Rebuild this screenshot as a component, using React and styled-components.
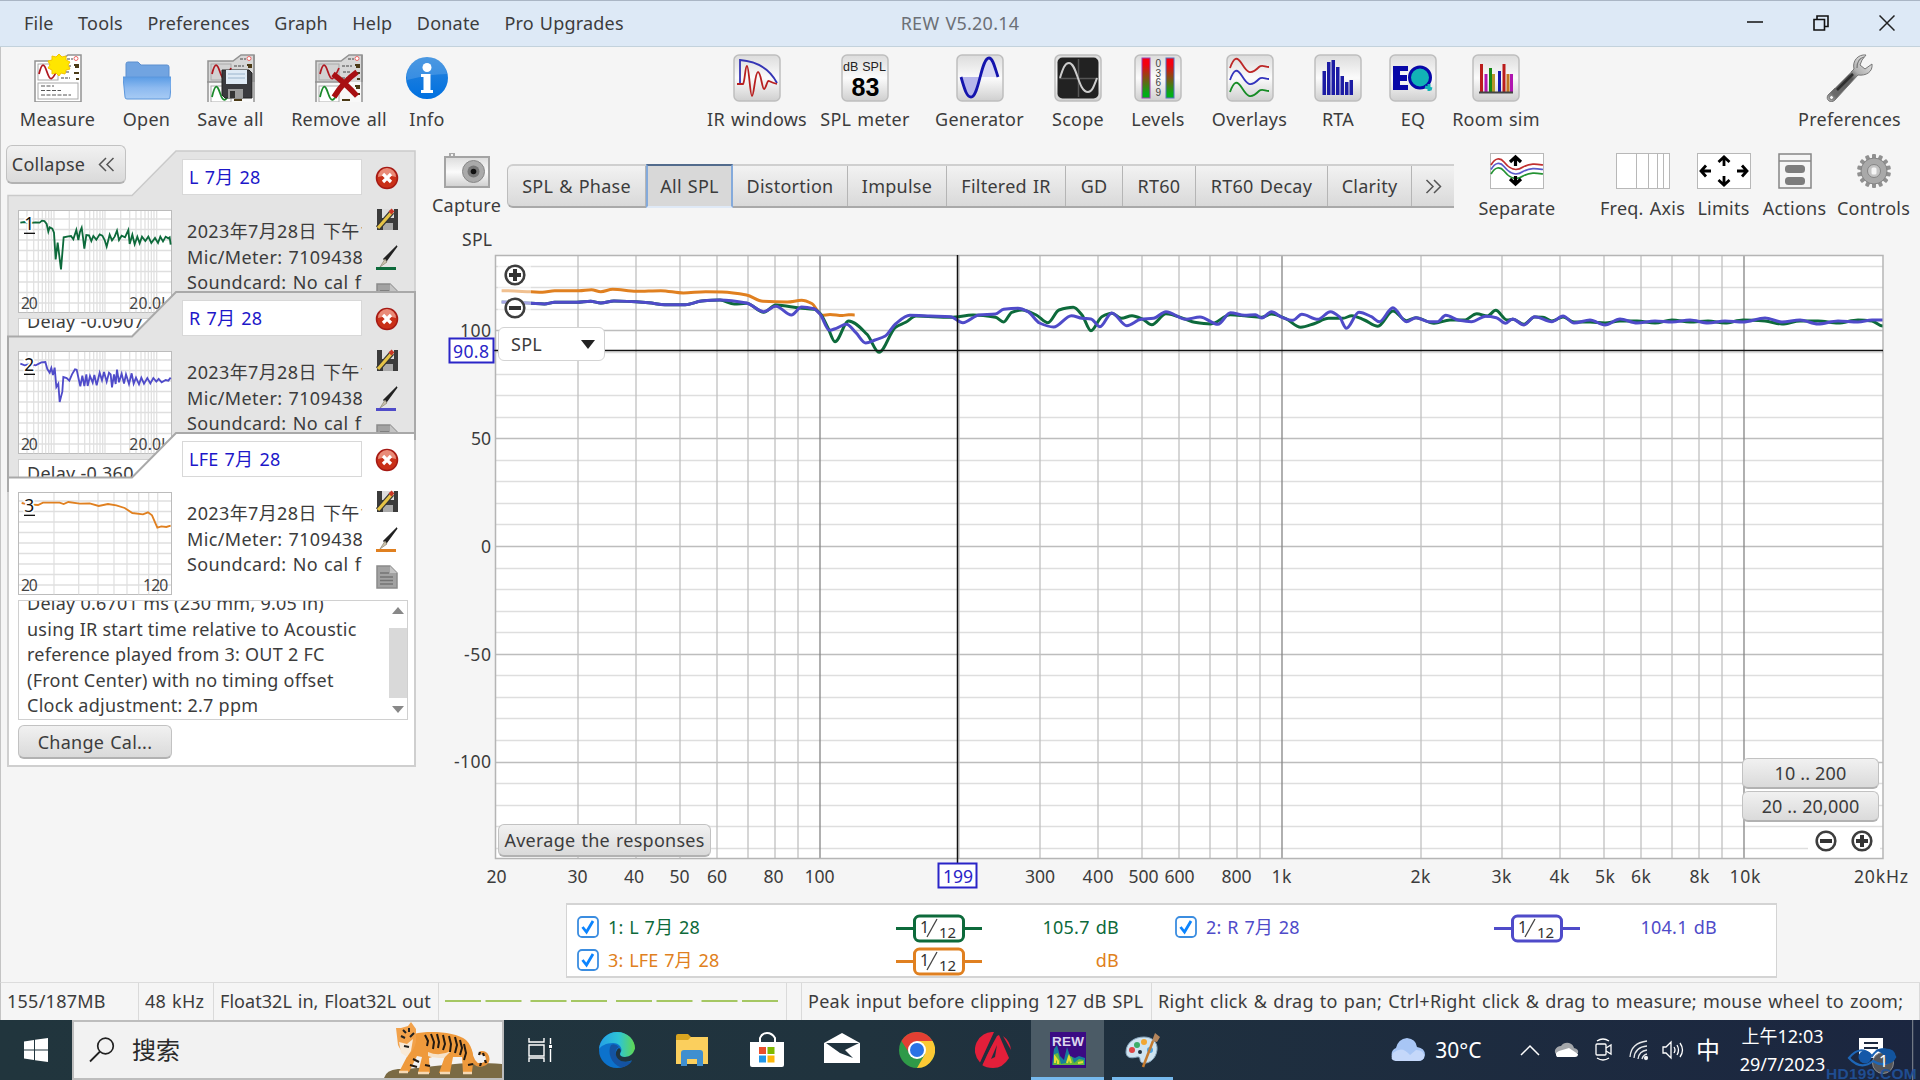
import styled, {createGlobalStyle} from "styled-components";

const GlobalStyle = createGlobalStyle`
    * {
        box-sizing: border-box;
    }

    body {
        margin: 0;
        overflow: hidden;
        background: #f5f5f5;
        color: #3c3c3c;
        font-family: "Noto Sans", "Noto Sans CJK SC", sans-serif;
        font-size: 18px;
        line-height: 24px;
        letter-spacing: 0.25px;
        word-spacing: 1.1px;
        white-space: nowrap;
    }

    svg {
        display: block;
        flex: none;
        letter-spacing: 0;
        word-spacing: 0;
    }
`;

const Window = styled.div`
    width: 1920px;
    height: 1080px;
    display: flex;
    flex-direction: column;
    overflow: hidden;
`;

const TitleBar = styled.header`
    height: 47px;
    display: grid;
    grid-template-columns: 840px 240px 1fr;
    align-items: center;
    padding-bottom: 2px;
    background: #dde9f6;
    border-top: 1px solid #aab6c5;
    border-bottom: 1px solid #c3d2dc;
`;

const Menu = styled.nav`
    display: flex;
    padding-left: 24px;
    gap: 24.5px;
    letter-spacing: 0.2px;
`;

const Title = styled.div`
    text-align: center;
    color: #6c7076;
`;

const WindowButtons = styled.div`
    display: flex;
    justify-content: flex-end;
    gap: 50px;
    padding-right: 25px;
`;

const Toolbar = styled.div`
    height: 93px;
    display: flex;
    align-items: flex-start;
    padding-top: 7px;
    border-left: 1px solid #c4c4c4;
`;

const Tool = styled.div`
    width: ${(props) => props.$width}px;
    margin-left: ${(props) => props.$gap}px;
    flex: none;
    display: flex;
    flex-direction: column;
    align-items: center;
    gap: ${(props) => props.$space || 5}px;
`;

const Main = styled.main`
    height: 842px;
    display: flex;
    border-left: 1px solid #c4c4c4;
`;

const Sidebar = styled.aside`
    width: 430px;
    flex: none;
    padding: 5px 0 0 5px;
`;

const Button = styled.button`
    width: ${(props) => props.$width}px;
    height: ${(props) => props.$height}px;
    display: flex;
    align-items: center;
    justify-content: center;
    gap: 13px;
    padding: 0;
    border: 1px solid #c2c2c2;
    border-bottom: 2px solid #b2b2b2;
    border-radius: 6px;
    background: linear-gradient(#f1f1f1, #dadada);
    color: inherit;
    font: inherit;
    letter-spacing: inherit;
    word-spacing: inherit;
`;

const CollapseButton = styled(Button)`
    padding-right: 5px;
`;

const Card = styled.section`
    position: relative;
    width: 411px;
    height: ${(props) => (props.$open ? 335 : 187)}px;
    margin-top: ${(props) => props.$offset}px;
    padding: 9px 9px 0 12px;
    overflow: hidden;
`;

const CardShape = styled.svg`
    position: absolute;
    left: 0;
    top: 0;
`;

const CardBody = styled.div`
    position: relative;
    display: grid;
    grid-template-columns: 164px 180px 1fr;
    height: 159px;
`;

const ThumbnailCell = styled.div`
    padding-top: 51px;
`;

const NameField = styled.div`
    height: 36px;
    padding: 5px 6px;
    border: 1px solid #d8d8d8;
    background: #fff;
    color: #1d17c9;
`;

const Details = styled.div`
    margin: 24px 0 0 5px;
    width: 175px;
    overflow: hidden;
    line-height: 25.7px;
    letter-spacing: 0.37px;
`;

const CardIcons = styled.div`
    display: grid;
    justify-items: center;
    align-content: start;
    grid-template-rows: 41px 38px 38px 25px;
    padding: 7px 0 0 3px;
`;

const Notes = styled.div`
    position: relative;
    height: ${(props) => (props.$open ? 120 : 19)}px;
    width: 390px;
    display: flex;
    justify-content: space-between;
    overflow: hidden;
    border: 1px solid #d0d0d0;
    background: #fff;
`;

const NotesText = styled.div`
    margin: ${(props) => props.$scroll}px 0 0 8px;
    line-height: 25.5px;
    word-spacing: 0;
`;

const Scrollbar = styled.div`
    width: 18px;
    height: 118px;
    display: flex;
    flex-direction: column;
    justify-content: space-between;
    background: #fff;
`;

const ScrollThumb = styled.div`
    height: 70px;
    margin-top: 8px;
    background: #d9d9d9;
`;

const CalRow = styled.div`
    position: relative;
    padding-top: 5px;
`;

const Content = styled.div`
    flex: 1;
    min-width: 0;
`;

const GraphBar = styled.div`
    height: 85px;
    display: flex;
    align-items: flex-start;
    padding-top: 13px;
`;

const Tabs = styled.div`
    display: flex;
    margin: 11px 0 0 6px;
    height: 44px;
    width: 947px;
    flex: none;
    border-radius: 6px 0 0 6px;
    border-top: 2px solid #cfcfcf;
    border-bottom: 2px solid #a9a9a9;
    border-left: 1px solid #bdbdbd;
    background: linear-gradient(#f2f2f2, #d9d9d9);
`;

const Tab = styled.div`
    width: ${(props) => props.$width}px;
    flex: none;
    display: flex;
    align-items: center;
    justify-content: center;
    border-right: 1px solid #b5b5b5;
    ${(props) =>
        props.$active &&
        `
        margin: -2px 0;
        background: #d8d8d8;
        border: 2px solid #84aadb;
        border-top-color: #526b8c;
        border-bottom-color: #dfe9f6;
    `}

    &:last-child {
        border-right: none;
    }
`;

const ChartArea = styled.div`
    position: relative;
    height: 675px;
`;

const Overlay = styled.div`
    position: absolute;
    left: ${(props) => props.$left}px;
    top: ${(props) => props.$top}px;
`;

const Select = styled.div`
    width: 107px;
    height: 34px;
    display: flex;
    align-items: center;
    justify-content: space-between;
    padding: 0 9px 0 12px;
    border: 1px solid #d3d3d3;
    border-radius: 6px;
    background: #fff;
`;

const RangeButtons = styled.div`
    display: flex;
    flex-direction: column;
    gap: 2px;
    letter-spacing: 0.15px;
    word-spacing: 0;
`;

const Legend = styled.div`
    width: 1211px;
    height: 75px;
    margin: 3px 0 0 135px;
    padding: 6px 0 0 10px;
    display: grid;
    grid-template-columns: 598px 598px;
    grid-auto-rows: 33px;
    border: 1px solid #d4d4d4;
    border-width: 2px 1px;
    background: #fff;
`;

const LegendItem = styled.div`
    display: grid;
    grid-template-columns: 31px 288px 86px 137px;
    align-items: center;
    letter-spacing: 0.1px;
    color: ${(props) => props.$color};
`;

const LegendName = styled.span`
    padding-bottom: 1px;
`;

const LegendValue = styled.div`
    text-align: right;
    padding-bottom: 1px;
    letter-spacing: 0.25px;
`;

const StatusBar = styled.footer`
    height: 38px;
    display: flex;
    border-top: 1px solid #dcdcdc;
    border-left: 1px solid #c4c4c4;
`;

const StatusCell = styled.div`
    width: ${(props) => props.$width}px;
    flex: none;
    display: flex;
    align-items: center;
    padding: 0 0 1px 6px;
    letter-spacing: ${(props) => props.$spacing || 0.25}px;
    border-right: 1px solid #dadada;
`;

const Taskbar = styled.div`
    height: 60px;
    display: flex;
    align-items: center;
    background: linear-gradient(90deg, #21353d, #20333e 45%, #1b2640);
    color: #fff;
`;

const StartButton = styled.div`
    width: 72px;
    display: flex;
    justify-content: center;
`;

const SearchBox = styled.div`
    width: 432px;
    height: 60px;
    display: flex;
    align-items: center;
    border: 2px solid #bdbdbd;
    background: #f2f2f2;
    color: #2b2b2b;
    padding-left: 15px;
    gap: 17px;
    font-size: 24px;
    letter-spacing: 0;
    overflow: hidden;
`;

const Tiger = styled.svg`
    margin-left: auto;
`;

const TaskButton = styled.div`
    width: ${(props) => props.$width || 75}px;
    height: 60px;
    flex: none;
    display: flex;
    align-items: center;
    justify-content: center;
    background: ${(props) => (props.$active ? "#4b5b66" : "transparent")};
    border-bottom: 3px solid ${(props) => (props.$running ? "#76b9ed" : "transparent")};
    border-top: 3px solid transparent;
`;

const Tray = styled.div`
    display: flex;
    align-items: center;
    margin-left: auto;
    height: 60px;
    position: relative;
`;

const TrayItem = styled.div`
    width: ${(props) => props.$width}px;
    margin-left: ${(props) => props.$gap || 0}px;
    padding-top: ${(props) => props.$drop || 0}px;
    flex: none;
    font-size: ${(props) => props.$size || 20}px;
    text-align: center;
    line-height: 28px;
    letter-spacing: 0;

    svg {
        margin: 0 auto;
    }
`;

const TrayTemperature = styled(TrayItem)`
    padding-right: 5px;
    font-size: 21px;
`;

const Watermark = styled.div`
    position: absolute;
    right: 3px;
    bottom: -6px;
    color: #21529a;
    font: bold 15.5px "Liberation Sans", sans-serif;
    line-height: 24px;
    opacity: 0.9;
`;

const GREEN = "#0d6a3b";
const BLUE = "#4f4bc9";
const ORANGE = "#e08020";

/* toolbar icons */

const MiniPanel = ({color, grey}) => (
    <g>
        <path d="M1 7H26L34 1H47V48H1Z" fill={grey ? "#d7d7d7" : "#fff"} stroke="#929292" strokeWidth="1.5" />
        <rect x="4" y="10" width="20" height="16" fill={grey ? "#d2d2d2" : "#fff"} stroke="#aaa" />
        <path d="M5 20C8 8 10 9 13 18S18 28 24 14" fill="none" stroke={color} strokeWidth="1.8" />
        <path d="M27 12H37M28 18H35M27 24H36M33 5H39" stroke="#444" strokeDasharray="3 1" />
        <circle cx="42" cy="4.500" r="2" fill="#fff" stroke="#e66" />
        <path d="M40 11h5M41 13h4M40 19h5M42 25h3" stroke="#4b3a16" strokeWidth="2" />
    </g>
);

const MeasureIcon = () => (
    <svg width="48" height="48">
        <MiniPanel color="#b01820" />
        <rect x="4" y="29" width="40" height="16" fill="#fff" stroke="#aaa" />
        <path d="M7 32H20M7 36.500H27M7 41H37" stroke="#555" strokeDasharray="4 1.5" />
        <path
            d="M25 0L28 3L32 2L32 6L36 8L34 11L36 15L32 16L31 20L27 19L25 22L22 19L18 20L18 16L14 14L16 11L14 7L18 6L18 2L22 3Z"
            fill="#ffe600"
            stroke="#f3c400"
        />
    </svg>
);

const OpenIcon = () => (
    <svg width="48" height="48" viewBox="0 0 48 48">
        <defs>
            <linearGradient id="folder" x1="0" y1="0" x2="0" y2="1">
                <stop offset="0" stopColor="#5b9ce5" />
                <stop offset="0.5" stopColor="#8dbaf0" />
                <stop offset="1" stopColor="#a7cbf4" />
            </linearGradient>
        </defs>
        <path d="M3 10Q3 8 5 8H15L18 11H44Q46 11 46 13V30H3Z" fill="#71a4e1" stroke="#5d8fcf" />
        <path d="M0 23H49L47 43Q47 45 45 45H4Q2 45 2 43Z" fill="url(#folder)" stroke="#5c97dc" />
    </svg>
);

const TwoPanels = ({children}) => (
    <svg width="48" height="48">
        <MiniPanel color="#b01820" grey />
        <path d="M0 28H48V48H0Z" fill="#f8f8f8" />
        <path d="M0 28H28M1 28V48M47 1V48" stroke="#929292" strokeWidth="1.5" />
        <rect x="4" y="32" width="20" height="16" fill="#fff" stroke="#aaa" />
        <path d="M5 43C8 30 10 30 13 39S18 49 24 37" fill="none" stroke="#1b8a2b" strokeWidth="1.8" />
        <path d="M40 32h5M41 34h4M40 40h5M27 46h8" stroke="#4b3a16" strokeWidth="2" />
        {children}
    </svg>
);

const SaveAllIcon = () => (
    <TwoPanels>
        <path d="M15 16H42L45 19V44H18L15 41Z" fill="#3a3a3e" stroke="#222" />
        <rect x="19" y="16" width="21" height="14" fill="#dfeaf5" />
        <path d="M21 20H38M21 24H38" stroke="#9bb4cc" />
        <rect x="21" y="35" width="15" height="9" fill="#9a9a9a" />
        <rect x="23" y="37" width="5" height="7" fill="#333" />
    </TwoPanels>
);

const RemoveAllIcon = () => (
    <TwoPanels>
        <path d="M18 20Q30 29 42 42M42 18Q28 28 19 43" fill="none" stroke="#a80f12" strokeWidth="5.500" />
    </TwoPanels>
);

const InfoIcon = () => (
    <svg width="48" height="48">
        <defs>
            <linearGradient id="info" x1="0" y1="0" x2="0" y2="1">
                <stop offset="0" stopColor="#2c86dc" />
                <stop offset="1" stopColor="#0070e0" />
            </linearGradient>
        </defs>
        <circle cx="24" cy="24" r="21" fill="url(#info)" />
        <path d="M4 26A20 20 0 0 1 44 20Q26 20 4 26Z" fill="#fff" opacity="0.15" />
        <circle cx="24" cy="13.500" r="4.500" fill="#fff" />
        <path d="M18 20H27.500V36H30V39H18V36H20.500V23H18Z" fill="#fff" />
    </svg>
);

const Tile = ({children, dark}) => (
    <svg width="48" height="48">
        <defs>
            <linearGradient id="tile" x1="0" y1="0" x2="0" y2="1">
                <stop offset="0" stopColor="#dcdcdc" />
                <stop offset="0.5" stopColor="#fbfbfb" />
                <stop offset="1" stopColor="#cfcfcf" />
            </linearGradient>
        </defs>
        <rect x="1" y="1" width="46" height="46" rx="5" fill="url(#tile)" stroke="#bebebe" strokeWidth="1.500" />
        {dark && <rect x="3.500" y="3.500" width="41" height="41" rx="5" fill="#222" />}
        {children}
    </svg>
);

const IrIcon = () => (
    <Tile>
        <path d="M7 30V6Q33 8 44 29" fill="none" stroke="#3535b5" strokeWidth="1.8" />
        <path d="M4 30H10C12 28 12 12 14 12S17 42 19 42S22 18 25 18S29 35 31 35S34 26 36 27S40 29 44 30" fill="none" stroke="#b82020" strokeWidth="1.8" />
    </Tile>
);

const SplIcon = () => (
    <Tile>
        <text x="2" y="16.500" fontSize="12.500" textLength="43" fontFamily="Liberation Sans, sans-serif" fill="#222">dB SPL</text>
        <text x="10.500" y="42" fontSize="25" textLength="28" fontWeight="bold" fontFamily="Liberation Sans, sans-serif" fill="#000">83</text>
    </Tile>
);

const GeneratorIcon = () => (
    <Tile>
        <path d="M5 23C9 35 11 43 15 43S22 31 24 23Z" fill="#b6b6ea" />
        <path d="M24 23C26 15 28 4 32 4S38 11 42 23Z" fill="#d8d8f3" />
        <path d="M5 23C9 37 11 43 15 43C23 43 25 4 33 4C37 4 39 14 42 23" fill="none" stroke="#1414ad" strokeWidth="2.800" />
    </Tile>
);

const ScopeIcon = () => (
    <Tile dark>
        <path d="M5 24.500H44M24.500 5V43" stroke="#555" strokeWidth="1.500" />
        <path d="M6 24C9 14 11 9 15 9C23 9 24 38 34 38C38 38 40 32 43 24" fill="none" stroke="#ccc" strokeWidth="2" />
    </Tile>
);

const LevelsIcon = () => (
    <Tile>
        <defs>
            <linearGradient id="level" x1="0" y1="0" x2="0" y2="1">
                <stop offset="0.150" stopColor="#f50010" />
                <stop offset="0.900" stopColor="#00ae18" />
            </linearGradient>
        </defs>
        <rect x="8" y="4" width="8" height="40" fill="url(#level)" stroke="#9b40b4" />
        <rect x="32" y="4" width="8" height="40" fill="url(#level)" stroke="#5472c0" />
        {["0", "3", "6", "9"].map((n, i) => (
            <text key={n} x="21.500" y={13 + i * 9.5} fontSize="10" fontFamily="Liberation Sans, sans-serif" fill="#444">{n}</text>
        ))}
    </Tile>
);

const OverlaysIcon = () => (
    <Tile>
        {["#bd2828", "#3434bd", "#178c26"].map((color, i) => (
            <path key={color} d="M4 14C8 3 11 2 16 10S24 22 33 13C36 10 39 13 43 13" transform={`translate(0 ${i * 12})`} fill="none" stroke={color} strokeWidth="1.8" />
        ))}
    </Tile>
);

const RtaIcon = () => (
    <Tile>
        {[24, 33, 35, 28, 19, 13, 15].map((h, i) => (
            <rect key={i} x={8.5 + i * 4.5} y={41 - h} width="3.500" height={h} fill="#1c1ca4" />
        ))}
    </Tile>
);

const EqIcon = () => (
    <Tile>
        <path d="M4 12H19V17H11V21H18V27H11V31H19V36H4Z" fill="#0808a8" />
        <circle cx="31" cy="23.500" r="10.500" fill="#12b2b6" stroke="#0808a8" strokeWidth="3" />
        <path d="M36 33L43 35M40 30V37" stroke="#12b2b6" strokeWidth="3" />
    </Tile>
);

const RoomIcon = () => (
    <Tile>
        {[
            [9, 28, "#bb1c1c"],
            [13.5, 18, "#b016b0"],
            [18, 24, "#158a15"],
            [21, 18, "#b7962c"],
            [27, 21, "#1919b0"],
            [31.5, 28, "#bb1c1c"],
            [35.5, 18, "#c07520"],
            [39, 18, "#b016b0"],
        ].map(([x, h, color]) => (
            <rect key={x} x={x - 1} y={38 - h} width="3" height={h} fill={color} />
        ))}
        <path d="M7 38.500H41" stroke="#444" strokeWidth="2" />
    </Tile>
);

const WrenchIcon = () => (
    <svg width="48" height="48">
        <defs>
            <linearGradient id="steel" x1="1" y1="0" x2="0" y2="1">
                <stop offset="0" stopColor="#f2f2f2" />
                <stop offset="0.350" stopColor="#b0b0b0" />
                <stop offset="0.480" stopColor="#5a5a5a" />
                <stop offset="0.850" stopColor="#6b6b6b" />
                <stop offset="1" stopColor="#bcbcbc" />
            </linearGradient>
        </defs>
        <path
            d="M40 1C32 0 26 7 28 15L2 41C-1 46 5 50 9 46L32 21C40 22 47 18 46 10L39 15L34 11L36 6Z"
            fill="url(#steel)"
            stroke="#777"
        />
        <path d="M11 36L27 20" stroke="#2e2e2e" strokeWidth="2.500" />
        <path d="M9 34L25 18" stroke="#a9a9a9" strokeWidth="1" />
        <path d="M31 14C31 8 34 4 38 3" fill="none" stroke="#777" strokeWidth="1.200" />
        <circle cx="5.500" cy="43.500" r="2" fill="#f5f5f5" stroke="#777" />
    </svg>
);

/* graph bar icons */

const CaptureIcon = () => (
    <svg width="46" height="35">
        <path d="M6 4V0h4v4" fill="none" stroke="#aaa" strokeWidth="2" />
        <rect x="1" y="4" width="44" height="30" fill="url(#tile)" stroke="#a4a4a4" strokeWidth="2" />
        <circle cx="29.500" cy="18.500" r="11" fill="#aaa" stroke="#888" />
        <circle cx="29.500" cy="18.500" r="6" fill="#777" />
        <circle cx="29.500" cy="18.500" r="2.800" fill="#111" />
    </svg>
);

const SeparateIcon = () => (
    <svg width="54" height="36">
        <rect x="0.500" y="0.500" width="53" height="35" fill="#fff" stroke="#b8b8b8" />
        {["#c03030", "#5a5ac9", "#249333"].map((color, i) => (
            <path key={color} d="M1 12C5 5 10 4 14 9S24 20 33 14C41 10 46 11 53 12" transform={`translate(0 ${i * 4.5})`} fill="none" stroke={color} strokeWidth="1.700" />
        ))}
        <path d="M25.500 13V4M20 9L25.500 4L31 9M25.500 23V31M20 26L25.500 31L31 26" fill="none" stroke="#000" strokeWidth="3.200" />
    </svg>
);

const FreqAxisIcon = () => (
    <svg width="54" height="36">
        <rect x="0.500" y="0.500" width="53" height="35" fill="#fff" stroke="#b8b8b8" />
        <path d="M20.500 0V36M32.500 0V36M41.500 0V36M47.500 0V36" stroke="#b8b8b8" />
    </svg>
);

const LimitsIcon = () => (
    <svg width="54" height="36">
        <rect x="0.500" y="0.500" width="53" height="35" fill="#fff" stroke="#b8b8b8" />
        <path
            d="M27 13V4M21.500 9L27 4L32.500 9M27 23V32M21.500 27L27 32L32.500 27M14 18H4M9 12.500L4 18L9 23.500M40 18H50M45 12.500L50 18L45 23.500"
            fill="none"
            stroke="#000"
            strokeWidth="2.800"
        />
    </svg>
);

const ActionsIcon = () => (
    <svg width="34" height="36">
        <path d="M1 1H33V35H1ZM1 8H33" fill="none" stroke="#858585" strokeWidth="1.500" />
        <rect x="7" y="12" width="20" height="8" rx="3.500" fill="#7d7d7d" />
        <rect x="7" y="24" width="20" height="8" rx="3.500" fill="#7d7d7d" />
    </svg>
);

const ControlsIcon = () => (
    <svg width="34" height="36">
        {Array.from({length: 14}, (_, i) => (
            <rect key={i} x="15" y="1" width="4" height="7" rx="1" fill="#909090" transform={`rotate(${(i * 360) / 14} 17 18)`} />
        ))}
        <circle cx="17" cy="18" r="13" fill="#a9a9a9" stroke="#858585" />
        <circle cx="17" cy="18" r="6.500" fill="#c4c4c4" stroke="#858585" />
        <rect x="14.500" y="14.500" width="5" height="7" rx="1.500" fill="#f5f5f5" />
    </svg>
);

const leftTools = [
    ["Measure", 77, 18, MeasureIcon],
    ["Open", 49, 26, OpenIcon],
    ["Save all", 67, 26, SaveAllIcon],
    ["Remove all", 97, 26.5, RemoveAllIcon],
    ["Info", 35, 22, InfoIcon],
];

const middleTools = [
    ["IR windows", 99, 263, IrIcon],
    ["SPL meter", 87, 15, SplIcon],
    ["Generator", 88, 27, GeneratorIcon],
    ["Scope", 54, 27.5, ScopeIcon],
    ["Levels", 52, 27, LevelsIcon],
    ["Overlays", 75, 28, OverlaysIcon],
    ["RTA", 36, 33, RtaIcon],
    ["EQ", 48, 33, EqIcon],
    ["Room sim", 88, 15, RoomIcon],
    ["Preferences", 102, 258.5, WrenchIcon],
];

const graphTools = [
    ["Separate", 78, 24, SeparateIcon],
    ["Freq. Axis", 84, 44.5, FreqAxisIcon],
    ["Limits", 54, 12, LimitsIcon],
    ["Actions", 62, 13, ActionsIcon],
    ["Controls", 74, 11, ControlsIcon],
];

const tabs = [
    ["SPL & Phase", 138],
    ["All SPL", 87],
    ["Distortion", 115],
    ["Impulse", 99],
    ["Filtered IR", 119],
    ["GD", 57],
    ["RT60", 73],
    ["RT60 Decay", 132],
    ["Clarity", 84],
];

/* sidebar */

const Chevrons = ({flip}) => (
    <svg width="17" height="15" viewBox="0 0 17 15" transform={flip ? "scale(-1 1)" : undefined}>
        <path d="M8 1L1.500 7.500L8 14M15.500 1L9 7.500L15.500 14" fill="none" stroke="#555" strokeWidth="1.500" />
    </svg>
);

const DeleteIcon = () => (
    <svg width="24" height="24">
        <circle cx="12" cy="12" r="10.500" fill="#c93018" stroke="#a51a14" strokeWidth="1.500" />
        <path d="M3 11A9 9 0 0 1 21 11Q12 8 3 11Z" fill="#e98b78" />
        <path d="M8 8L16 16M16 8L8 16" stroke="#fff" strokeWidth="3.200" />
    </svg>
);

const SaveIcon = () => (
    <svg width="24" height="24">
        <path d="M2 2H23V23H2Z" fill="#3b3b3b" />
        <rect x="7" y="2" width="12" height="9" fill="#ddd" />
        <rect x="8" y="16" width="10" height="7" fill="#aaa" />
        <path d="M3 21L17 5" stroke="#333" strokeWidth="5.500" />
        <path d="M3 21L17 5" stroke="#e5c346" strokeWidth="3.200" />
        <path d="M15 6L18 3" stroke="#c83727" strokeWidth="4" />
    </svg>
);

const BrushIcon = ({color}) => (
    <svg width="24" height="26">
        <path d="M22 1L11 16L9 14Z" fill="#222" stroke="#222" strokeWidth="1.500" />
        <path d="M10 14L12 17L5 22Z" fill="#c9c2ae" stroke="#8c8573" strokeWidth="0.700" />
        <path d="M1 23.500H21" stroke={color} strokeWidth="3" />
    </svg>
);

const NoteIcon = () => (
    <svg width="22" height="25">
        <path d="M1 1H14L21 8V23H1Z" fill="#a2a2a2" stroke="#8b8b8b" strokeWidth="1.500" />
        <path d="M4 8H13M4 12H17M4 15.500H17M4 19H17" stroke="#747474" strokeWidth="1.500" />
        <path d="M14 1V8H21" fill="#c4c4c4" />
    </svg>
);

const measurements = [
    {
        id: 1,
        name: "L 7月 28",
        color: GREEN,
        end: "20.0k",
        scroll: -10,
        note: ["Delay -0.0907"],
        line: "62,248 75,246 92,249 108,247 120,248 127,242 134,243 141,252 146,275 150,262 158,266 163,278 168,358 174,308 184,388 192,292 206,289 214,288 221,298 230,270 236,300 241,275 246,263 250,292 254,326 260,285 268,286 275,303 281,288 290,299 300,283 308,287 315,300 321,320 330,284 337,301 345,290 352,272 358,300 366,287 376,292 386,270 390,312 398,284 405,313 413,290 420,310 427,290 437,303 446,290 455,309 466,294 475,309 482,290 490,304 498,290 506,295 510,292 513,314",
    },
    {
        id: 2,
        name: "R 7月 28",
        color: BLUE,
        end: "20.0k",
        scroll: 1,
        note: ["Delay -0.360"],
        line: "62,248 75,253 92,249 108,253 125,244 137,243 143,264 150,275 155,261 160,282 165,260 170,318 176,308 180,363 188,332 191,288 201,291 209,299 217,280 226,265 231,266 237,294 242,316 248,284 254,315 260,280 264,315 271,285 279,305 284,282 291,313 300,275 307,298 313,273 321,302 328,275 333,280 337,319 343,280 348,309 352,266 358,304 366,278 373,308 379,280 388,309 396,277 402,308 409,290 418,310 425,290 433,308 443,291 452,307 461,291 470,302 477,294 486,304 498,297 506,299 513,290",
    },
    {
        id: 3,
        name: "LFE 7月 28",
        color: ORANGE,
        end: "120",
        scroll: -10,
        note: [
            "Delay 0.6701 ms (230 mm, 9.05 in)",
            "using IR start time relative to Acoustic",
            "reference played from 3: OUT 2 FC",
            "(Front Center) with no timing offset",
            "Clock adjustment: 2.7 ppm",
        ],
        line: "66,243 85,247 115,249 130,242 180,242 192,246 206,240 240,245 270,244 297,252 325,246 350,250 375,258 398,273 430,277 445,271 457,280 473,317 485,313 500,315 513,311",
    },
];

const logLines = [27, 47, 61, 73, 83, 92, 100, 108, 154, 181, 200, 215, 227, 237, 246, 254, 261, 308, 335, 354, 369, 381, 391, 400, 408, 416];

const Thumbnail = ({item}) => {
    const columns = item.id === 3 ? [108, 182, 240, 288, 327, 362, 392, 419] : logLines;
    return (
        <svg width="154" height="103" viewBox="55 210 462 309">
            <rect x="56.500" y="211.500" width="459" height="306" fill="#fff" stroke="#bcbcbc" strokeWidth="3" />
            {columns.map((x) => (
                <path key={x} d={`M${x + 55} 213V517`} stroke="#e2e2e2" strokeWidth="4" />
            ))}
            {Array.from({length: 9}, (_, i) => (
                <path key={i} d={`M58 ${237 + i * 31.5}H514`} stroke="#dfdfdf" strokeWidth="4" />
            ))}
            <polyline points={item.line} fill="none" stroke={item.color} strokeWidth="5.500" />
            <text x="74" y="270" fontSize="52" fill="#111" stroke="#fff" strokeWidth="10" paintOrder="stroke">{item.id}</text>
            <path d="M73 280H106" stroke="#111" strokeWidth="4" />
            <text x="64" y="506" fontSize="47" textLength="50" fill="#444">20</text>
            <text x={item.id === 3 ? 430 : 389} y="506" fontSize="47" textLength={item.id === 3 ? 76 : 121} fill="#444">{item.end}</text>
        </svg>
    );
};

const MeasurementCard = ({item, offset}) => {
    const open = item.id === 3;
    const bottom = open ? 334 : 200;
    return (
        <Card $open={open} $offset={offset}>
            <CardShape width="411" height={bottom + 1}>
                <path
                    d={`M2 ${bottom}V45.5H126L170 1H409V${bottom}Z`}
                    fill={open ? "#fff" : "#e4e4e4"}
                    stroke={item.id === 1 ? "#cacaca" : "#a9a9a9"}
                    strokeWidth={item.id === 1 ? 1.5 : 2}
                />
                {open && <path d="M2 60V334H409V8" fill="none" stroke="#cfcfcf" strokeWidth="2" />}
            </CardShape>
            <CardBody>
                <ThumbnailCell>
                    <Thumbnail item={item} />
                </ThumbnailCell>
                <div>
                    <NameField>{item.name}</NameField>
                    <Details>
                        2023年7月28日 下午1
                        <br />
                        Mic/Meter: 7109438
                        <br />
                        Soundcard: No cal f
                    </Details>
                </div>
                <CardIcons>
                    <DeleteIcon />
                    <SaveIcon />
                    <BrushIcon color={item.color} />
                    <NoteIcon />
                </CardIcons>
            </CardBody>
            <Notes $open={open}>
                <NotesText $scroll={item.scroll}>
                    {item.note.map((text) => (
                        <div key={text}>{text}</div>
                    ))}
                </NotesText>
                {open && (
                    <Scrollbar>
                        <svg width="18" height="18">
                            <path d="M3 13L9 6L15 13Z" fill="#888" />
                        </svg>
                        <ScrollThumb />
                        <svg width="18" height="20">
                            <path d="M3 7L9 14L15 7Z" fill="#888" />
                        </svg>
                    </Scrollbar>
                )}
            </Notes>
            {open && (
                <CalRow>
                    <Button $width={154} $height={34}>Change Cal...</Button>
                </CalRow>
            )}
        </Card>
    );
};

/* chart, drawn in window coordinates */

const X100 = 819.5;
const DECADE = 462;
const freqX = (f) => X100 + DECADE * Math.log10(f / 100);
const dbY = (db) => 546 - db * 2.156;

const frequencies = [30, 40, 50, 60, 70, 80, 90, 100, 200, 300, 400, 500, 600, 700, 800, 900, 1000, 2000, 3000, 4000, 5000, 6000, 7000, 8000, 9000, 10000];

const levels = Array.from({length: 28}, (_, i) => 130 - i * 10);

const orangePoints = [
    [501.6, 290.7], [531, 291.8], [542.4, 292.3], [554.7, 290.7], [579, 290.7], [591.4, 289.7], [600.8, 291.7], [612.7, 289.3], [636.3, 291.3], [660.8, 290.7],
    [683.3, 293], [705.7, 291.7], [722, 292], [746.5, 295], [762.9, 301.3], [787.3, 302], [801.6, 300.3], [811.8, 303.5], [822, 315.3], [830, 314.5], [842.4, 315.6],
    [848.6, 314.7], [854.7, 315],
];

const lowPoints = [
    [501.6, 302], [531, 303.3], [544.5, 304], [554.7, 302.3], [577, 302.3], [590.6, 301.3], [600.8, 303], [613.9, 301], [648.6, 302.7], [664.9, 304.7], [685.3, 304.7],
    [701.6, 301], [720, 300],
];

const bluePoints = [
    ...lowPoints,
    [746.5, 303], [763.7, 311.7], [775.9, 306.3], [791.4, 315], [801.6, 307], [813.9, 308.7], [820, 314], [829.4, 330.3], [836.3, 328.3], [846.5, 324.3],
    [855.9, 332.7], [865.7, 343], [875, 340], [885.3, 336], [895.5, 324], [909.8, 315.3], [930, 316], [950.6, 316.7], [962.9, 322.7], [979, 315], [995.5, 314],
    [1003.7, 309.3], [1018, 308.3], [1028, 311.7], [1039.5, 323], [1053.6, 327], [1071.4, 315.7], [1082, 318.3], [1091, 319], [1100, 326.7], [1111.8, 313],
    [1126.8, 325.7], [1141, 319.3], [1153.6, 318.3], [1166, 311.7], [1185.7, 319.3], [1200, 317], [1217.9, 324.3], [1230.4, 312.7], [1244.6, 315.3], [1255.4, 314.7],
    [1261.8, 318], [1271.4, 311.7], [1282, 317.3], [1292.9, 320.3], [1301.8, 314.3], [1317.9, 319.3], [1330.4, 311.7], [1339.3, 316.7], [1346.4, 328.3],
    [1358.9, 312.3], [1371.4, 316.7], [1379.3, 321.7], [1392.9, 307.7], [1406.4, 321.7], [1416, 317.7], [1428.6, 321.7], [1437.5, 321.7], [1445.7, 315.3],
    [1458.9, 320.3], [1471.4, 321.7], [1485.7, 316.3], [1496.4, 317.7], [1505.4, 323.3], [1512.5, 319], [1523.9, 325], [1534.6, 316.7], [1551.8, 321.7],
    [1563, 316], [1574, 323], [1590, 320], [1605, 325], [1620, 319], [1637, 323], [1655, 321], [1672, 322], [1690, 320], [1708, 323], [1725, 321], [1743, 322],
    [1765, 318], [1782, 322], [1800, 320], [1818, 324], [1838, 321], [1858, 322], [1872, 320], [1882.5, 320],
];

const greenPoints = [
    ...lowPoints,
    [734.3, 304], [746.5, 303.3], [763.7, 312.3], [775.9, 305], [799.6, 308], [814, 309.3], [820, 313.3], [828, 328], [835, 341.7], [848.6, 321], [867, 334.3],
    [879, 352.3], [895.5, 327.3], [905.7, 322.3], [916, 316], [950.6, 317.3], [973, 315], [995.5, 317.3], [1003.7, 322], [1011.8, 312.3], [1022, 310], [1036.3, 315],
    [1048, 322.7], [1059, 310], [1073.2, 307.3], [1082, 315], [1091, 330.7], [1101.8, 316.7], [1111.8, 313.3], [1121.4, 318.3], [1132, 315.7], [1142.9, 319.3],
    [1151.8, 324.7], [1166, 313.7], [1185.7, 319.3], [1194.6, 322.3], [1210.7, 324], [1230.4, 314.7], [1246.4, 316], [1261.8, 317.3], [1271.4, 314],
    [1285.7, 318.7], [1300.7, 327.3], [1314, 323.7], [1328.6, 318.3], [1342.9, 318.3], [1351.8, 315.7], [1364.3, 320], [1377.9, 326.3], [1392.9, 311],
    [1406.4, 320.7], [1416, 317.7], [1434, 323.3], [1450, 320], [1464.3, 320], [1476.8, 313.7], [1487.5, 316], [1495.7, 310.3], [1507, 320], [1513, 319.3],
    [1523.9, 324.3], [1534.6, 317], [1542.9, 317.3], [1551.8, 321], [1563, 317], [1574, 322], [1590, 322], [1605, 323], [1620, 321], [1637, 321], [1655, 323],
    [1672, 320], [1690, 322], [1708, 321], [1725, 323], [1743, 320], [1765, 321], [1782, 324], [1800, 321], [1818, 321], [1838, 323], [1858, 320], [1872, 321],
    [1882.5, 326],
];

// smooth path through the points, flat at each turning point
const toCurve = (points) => {
    const slopes = points.map((p, i) => {
        if (i === 0 || i === points.length - 1) return 0;
        const a = (p[1] - points[i - 1][1]) / (p[0] - points[i - 1][0]);
        const b = (points[i + 1][1] - p[1]) / (points[i + 1][0] - p[0]);
        return a * b <= 0 ? 0 : (2 * a * b) / (a + b);
    });
    return points.reduce((path, p, i) => {
        if (i === 0) return `M${p[0]} ${p[1]}`;
        const q = points[i - 1];
        const dx = (p[0] - q[0]) / 3;
        return `${path}C${q[0] + dx} ${q[1] + slopes[i - 1] * dx} ${p[0] - dx} ${p[1] - slopes[i] * dx} ${p[0]} ${p[1]}`;
    }, "");
};

const xLabels = [
    ["20", 496.5, 20], ["30", 577.5, 20], ["40", 634, 20], ["50", 679.5, 20], ["60", 717, 20], ["80", 773.5, 20], ["100", 819.5, 30], ["300", 1040, 30], ["400", 1098, 31],
    ["500", 1143.5, 30], ["600", 1179.5, 30], ["800", 1236.5, 30], ["1k", 1281.5, 20], ["2k", 1420.5, 20], ["3k", 1501.5, 20], ["4k", 1559.5, 20], ["5k", 1605, 20],
    ["6k", 1641, 20], ["8k", 1699.5, 20], ["10k", 1745, 31], ["20kHz", 1881, 54],
];

const Zoomer = ({x, y, plus}) => (
    <g transform={`translate(${x} ${y})`}>
        <circle r="9.300" fill="#fff" stroke="#3e3e3e" strokeWidth="2.600" />
        <path d={plus ? "M-6 0H6M0 -6V6" : "M-6 0H6"} stroke="#333" strokeWidth="4" />
    </g>
);

const Chart = () => (
    <svg width="1489" height="675" viewBox="431 225 1489 675" fill="#3c3c3c" fontSize="17.600">
        <rect x="495.500" y="255.500" width="1388" height="603" fill="#fff" />
        {levels.map((db) => (
            <path key={db} d={`M495 ${Math.round(dbY(db)) + 0.5}H1883`} stroke={db % 50 === 0 ? "#bdbdbd" : "#dedede"} strokeWidth="1.300" />
        ))}
        {frequencies.map((f) => (
            <path key={f} d={`M${Math.round(freqX(f))} 256V858`} stroke={[100, 1000, 10000].includes(f) ? "#858585" : "#c0c0c0"} strokeWidth="1.300" />
        ))}
        <rect x="495.500" y="255.500" width="1387.500" height="603" fill="none" stroke="#b5b5b5" strokeWidth="1.500" />
        <g fill="none" strokeWidth="3">
            <path d={toCurve(orangePoints)} stroke={ORANGE} />
            <path d={toCurve(greenPoints)} stroke={GREEN} />
            <path d={toCurve(bluePoints)} stroke={BLUE} />
        </g>
        <rect x="498" y="262" width="33" height="60" fill="#fff" opacity="0.500" />
        <path d="M493 350.500H1883M957.500 255V863" stroke="#111" strokeWidth="1.500" />
        <Zoomer x={515} y={275} plus />
        <Zoomer x={515} y={308} />
        <rect x="1808" y="828" width="72" height="26" fill="#fff" />
        <Zoomer x={1826} y={841} />
        <Zoomer x={1862} y={841} plus />
        <text x="462" y="245.500" textLength="30">SPL</text>
        <text x="491" y="336.500" textAnchor="end" textLength="31">100</text>
        <text x="491" y="445" textAnchor="end" textLength="20">50</text>
        <text x="491" y="552.500" textAnchor="end">0</text>
        <text x="491" y="660.500" textAnchor="end" textLength="27">-50</text>
        <text x="491" y="768" textAnchor="end" textLength="37">-100</text>
        {xLabels.map(([label, x, width]) => (
            <text key={label} x={x} y="883" textAnchor="middle" textLength={width}>{label}</text>
        ))}
        <g fill="#2a25c7">
            <rect x="449.500" y="338.500" width="44" height="24" fill="#fff" stroke="#2a25c7" strokeWidth="2" />
            <text x="453" y="358" textLength="36">90.8</text>
            <rect x="938.500" y="863.500" width="38" height="24" fill="#fff" stroke="#2a25c7" strokeWidth="2" />
            <text x="943" y="883" textLength="30">199</text>
        </g>
    </svg>
);

const Checkbox = () => (
    <svg width="22" height="24">
        <rect x="1" y="1" width="20" height="20" rx="4" fill="#fff" stroke="#3b8de0" strokeWidth="1.800" />
        <path d="M5.500 11L9.500 16L16 5" fill="none" stroke="#0b84ff" strokeWidth="2.800" />
    </svg>
);

const Smoothing = ({color}) => (
    <svg width="86" height="30">
        <path d="M0 15.500H19M67 15.500H86" stroke={color} strokeWidth="3" />
        <rect x="18.500" y="3" width="49" height="25" rx="5" fill="#fff" stroke={color} strokeWidth="3" />
        <text x="24" y="19.500" fontSize="16" fill="#333">1</text>
        <path d="M41 6L31 24" stroke="#444" strokeWidth="1.300" />
        <text x="43" y="24.500" fontSize="15" textLength="17" fill="#333">12</text>
    </svg>
);

const legend = [
    ["1: L 7月 28", "105.7 dB", GREEN],
    ["2: R 7月 28", "104.1 dB", BLUE],
    ["3: LFE 7月 28", "dB", ORANGE],
];

/* taskbar icons */

const tigerStripes = ["M41 13L44 19L43 24", "M47 12L50 20L49 27", "M53 12L55 20L54 26", "M59 13L61 22L59 28", "M65 14L67 22L66 30", "M71 15L73 23L71 31", "M76 18L78 26L76 33", "M80 22L82 31L80 38", "M26 43L33 45", "M29 37L35 40", "M41 43L46 44", "M84 43L89 42"];

const TigerImage = () => (
    <Tiger width="118" height="56" viewBox="0 0 118 56">
        <path d="M0 56Q2 48 14 47C45 47 70 38 118 42V56Z" fill="#7a6a44" />
        <path d="M86 28Q89 44 97 43Q106 41 103 34Q101 30 96 31" fill="none" stroke="#e8943a" strokeWidth="3.500" />
        <path d="M30 12C45 8 72 10 82 18C90 26 90 36 88 50L79 51L78 35L69 35L66 51L55 51L61 34Q52 33 45 36L46 51H34L38 35L33 34L25 50H15L27 27Z" fill="#ef9a3c" />
        <path d="M44 30Q55 35 67 29L60 36Q50 36 44 34Z" fill="#f6e2c8" />
        <path d="M12 6L17 6L24 4L27 0L32 7L32 20Q30 28 24 34Q17 30 14 23Z" fill="#f2a24b" />
        <path d="M15 20L23 22L29 17L27 29L23 35L17 31Z" fill="#f8ead8" />
        <path d="M17 14L21 16M26 15L30 11M19 8L22 11M25 6V10M20 24L25 25" stroke="#222" strokeWidth="2" fill="none" />
        {tigerStripes.map((d) => (
            <path key={d} d={d} fill="none" stroke="#231a12" strokeWidth="2" />
        ))}
        <path d="M96 44L97 41M102 41L101 38M99 31L100 34M95 33L96 30" stroke="#231a12" strokeWidth="2.200" />
        <path d="M15 50h9M34 51h11M56 51h10M79 51h9" stroke="#f6d9b4" strokeWidth="2.500" />
    </Tiger>
);

const EdgeIcon = () => (
    <svg width="36" height="36" viewBox="0 0 36 36">
        <defs>
            <linearGradient id="edge" x1="0" y1="0.500" x2="1" y2="0.500">
                <stop offset="0" stopColor="#249fe6" />
                <stop offset="0.550" stopColor="#2ec4d6" />
                <stop offset="1" stopColor="#62d84e" />
            </linearGradient>
        </defs>
        <circle cx="18" cy="18" r="18" fill="#0c72cc" />
        <path d="M0 17C1 7 9 0 18 0C29 0 36 8 36 16C36 22 31 25 26 25C22 25 20 23 22 20C24 16 20 11 14 11C7 11 2 14 0 17Z" fill="url(#edge)" />
        <path d="M12 13C8 20 12 32 22 35.500C27 35 31 32 33 29C26 32 18 28 17 22C16 18 18 16 20 15Q16 11 12 13Z" fill="#1453a2" />
        <path d="M36 17V27L33.500 28Q28 31 22 29Q16 26 17 20Q18 17 20 16Q23 18 21 21Q20 25 26 25Q33 25 36 17Z" fill="#20343e" />
    </svg>
);

const ExplorerIcon = () => (
    <svg width="34" height="34">
        <path d="M1 3Q1 1 3 1H13L16 4H33V30H1Z" fill="#d9a520" />
        <path d="M1 7H13L16 4H33V31H1Z" fill="#fbcf5d" />
        <path d="M6 33V20Q6 17 9 17H25Q28 17 28 20V33H22V26H12V33Z" fill="#3f8fd0" />
    </svg>
);

const StoreIcon = () => (
    <svg width="36" height="36">
        <path d="M11 11V6Q13 1 18 1T26 6V11" fill="none" stroke="#fff" strokeWidth="2" />
        <path d="M1 10H35V33Q35 35 33 35H3Q1 35 1 33Z" fill="#fff" />
        <path d="M10 15h7v7h-7z" fill="#e94f2c" />
        <path d="M18.500 15h7v7h-7z" fill="#7fb900" />
        <path d="M10 23.500h7v7h-7z" fill="#2197e8" />
        <path d="M18.500 23.500h7v7h-7z" fill="#fbb60a" />
    </svg>
);

const MailIcon = () => (
    <svg width="36" height="34">
        <path d="M0 10L18 0L36 10V30H0Z" fill="#fff" />
        <path d="M2 10H35L21 17L29 25L16 20Z" fill="#20333e" />
    </svg>
);

const ChromeIcon = () => (
    <svg width="36" height="36" viewBox="-18 -18 36 36">
        <circle r="18" fill="#2f9a48" />
        <path d="M-15.600 -9A18 18 0 0 1 15.600 -9H0L-7 4Z" fill="#e33f33" />
        <path d="M15.600 -9A18 18 0 0 1 0 18L8 4L0 -9Z" fill="#fcc934" />
        <circle r="9" fill="#fff" />
        <circle r="7" fill="#2b73e4" />
    </svg>
);

const RedIcon = () => (
    <svg width="36" height="36">
        <path d="M19 0A18 18 0 0 0 5 30.500Z" fill="#e31f3a" />
        <path d="M24 3L34 26Q28 36 18 36Q11 36 7 33L11 24L22 4Z" fill="#e31f3a" />
        <path d="M28 4Q35 9 36 18Z" fill="#e31f3a" />
        <path d="M20 3L6 33" stroke="#20303e" strokeWidth="2.500" />
        <path d="M22 13L16 27L20 25Z" fill="#20303e" />
    </svg>
);

const RewIcon = () => (
    <svg width="36" height="36">
        <rect width="36" height="36" fill="#3b0b83" />
        <text x="2" y="14" fontSize="13.500" textLength="32" fontWeight="bold" fontFamily="Liberation Sans, sans-serif" fill="#dcd6ee">REW</text>
        <path d="M2 33L4 17L7 13L10 24L14 28L17 15L20 24L25 26L29 24L35 26V33Z" fill="#177e9c" />
        <path d="M3 33L5 22L8 21L11 32L16 31L18 23L22 25L24 31L29 27L34 28V33Z" fill="#62b83c" />
        <path d="M5 31V25L8 29V32M17 31L19 25L21 31M28 31L33 30" stroke="#e6dc35" strokeWidth="2" fill="none" />
    </svg>
);

const PaintIcon = () => (
    <svg width="36" height="36">
        <path d="M1 20C1 11 9 5 19 5C28 5 33 11 32 18C31 27 24 32 18 31C13 30 17 24 12 25C5 27 1 25 1 20Z" fill="#cfe4f1" stroke="#86a4bb" />
        <circle cx="7" cy="18" r="3" fill="#df4545" />
        <circle cx="12" cy="13" r="3" fill="#3dad68" />
        <circle cx="19" cy="10" r="3" fill="#f2a732" />
        <circle cx="25" cy="18" r="3" fill="#4fa3e0" />
        <circle cx="15" cy="20" r="2" fill="#20303e" />
        <path d="M28 9L18 35" stroke="#c47b30" strokeWidth="2.500" />
        <path d="M27 9L30 1L35 5L32 10Z" fill="#b4855c" />
    </svg>
);

const WindowsLogo = () => (
    <svg width="24" height="24">
        <path d="M0 3.500L10 2V11.500H0ZM11 1.800L24 0V11.500H11ZM0 12.500H10V22L0 20.500ZM11 12.500H24V24L11 22.200Z" fill="#fff" />
    </svg>
);

const SearchIcon = () => (
    <svg width="26" height="26">
        <circle cx="16.500" cy="9" r="7.800" fill="none" stroke="#222" strokeWidth="1.700" />
        <path d="M11 14.500L1 24.500" stroke="#222" strokeWidth="1.800" />
    </svg>
);

const TaskViewIcon = () => (
    <svg width="27" height="24" fill="none" stroke="#fff" strokeWidth="1.400">
        <path d="M1 0V4H16V0M1 7H16V18H1ZM1 24V20H16V24M22.500 0V6M22.500 11V24" />
        <path d="M21 8.500h3" strokeWidth="3" />
    </svg>
);

const CloudIcon = () => (
    <svg width="36" height="24">
        <path d="M7 23A7 7 0 0 1 7 10Q9 1 18 0Q27 1 28 9Q36 10 36 17Q35 23 29 23Z" fill="#a8c6f5" />
        <path d="M4 15Q13 7 21 17L27 12Q36 12 35 20Q33 23 29 23H7Q0 22 4 15Z" fill="#c5d8fa" />
    </svg>
);

const OneDriveIcon = () => (
    <svg width="25" height="16">
        <path d="M5 14Q0 12 1 8Q3 4 7 4Q10 0 15 1Q19 2 20 6Q25 7 24 11L12 14Z" fill="#a4a7ab" />
        <path d="M3 15Q0 11 5 9L15 6L24 12Q24 15 21 15Z" fill="#fff" />
    </svg>
);

const MeetIcon = () => (
    <svg width="17" height="24" fill="none" stroke="#fff" strokeWidth="1.300">
        <path d="M2 3Q8 -1 14 3M2 20Q8 24 14 20" />
        <rect x="1" y="6" width="10" height="11" rx="1" />
        <path d="M11 10L16 7V16L11 13" />
    </svg>
);

const WifiIcon = () => (
    <svg width="20" height="22" fill="none" stroke="#e6e8ea" strokeWidth="1.300">
        <path d="M1 18Q2 4 18 2M5 19Q6 8 18 7M9 20Q10 12 18 11M13 20Q14 16 18 15" />
        <circle cx="17" cy="19" r="1.500" fill="#fff" />
    </svg>
);

const VolumeIcon = () => (
    <svg width="23" height="20" fill="none" stroke="#fff" strokeWidth="1.300">
        <path d="M1 7H4L9 2V18L4 13H1ZM12 7Q14 10 12 13M15 5Q18 10 15 15M18 3Q23 10 18 17" />
    </svg>
);

const ActionCenterIcon = () => (
    <svg width="52" height="40">
        <path d="M12 1H36V21H22L18 26V21H12Z" fill="#fff" />
        <path d="M17 6H31M17 11H31" stroke="#1d2a40" strokeWidth="2" />
        <circle cx="36" cy="26" r="10.500" fill="#54565a" stroke="#8a8c90" />
        <path d="M2 21Q13 7 25 19Q35 5 48 20Q38 32 26 24Q14 34 2 21Z" fill="none" stroke="#1e66b6" strokeWidth="2.200" />
        <circle cx="18" cy="20" r="6.500" fill="#1458a8" />
        <path d="M28 13Q48 8 49 20Q47 27 38 27Q42 18 28 13Z" fill="#12549e" />
        <text x="32" y="30" fontSize="16" fill="#fff">1</text>
    </svg>
);

const apps = [
    [EdgeIcon, 75],
    [ExplorerIcon, 75],
    [StoreIcon, 75],
    [MailIcon, 75],
    [ChromeIcon, 75],
    [RedIcon, 77],
];

const ToolList = ({tools, space}) =>
    tools.map(([label, width, gap, Icon]) => (
        <Tool key={label} $width={width} $gap={gap} $space={space}>
            <Icon />
            <span>{label}</span>
        </Tool>
    ));

const App = () => (
    <Window>
        <GlobalStyle />
        <TitleBar>
            <Menu>
                {["File", "Tools", "Preferences", "Graph", "Help", "Donate", "Pro Upgrades"].map((name) => (
                    <span key={name}>{name}</span>
                ))}
            </Menu>
            <Title>REW V5.20.14</Title>
            <WindowButtons>
                <svg width="16" height="16">
                    <path d="M0 7H16" stroke="#111" strokeWidth="1.500" />
                </svg>
                <svg width="16" height="16" fill="none" stroke="#111" strokeWidth="1.600">
                    <path d="M1 4.500H11.500V15H1ZM4 4.500V1H15V11.500H11.500" />
                </svg>
                <svg width="16" height="16">
                    <path d="M0.500 0.500L15.500 15.500M15.500 0.500L0.500 15.500" stroke="#222" strokeWidth="1.500" />
                </svg>
            </WindowButtons>
        </TitleBar>
        <Toolbar>
            <ToolList tools={leftTools} />
            <ToolList tools={middleTools} />
        </Toolbar>
        <Main>
            <Sidebar>
                <CollapseButton $width={120} $height={39}>
                    Collapse
                    <Chevrons />
                </CollapseButton>
                {measurements.map((item, i) => (
                    <MeasurementCard key={item.id} item={item} offset={i === 0 ? -34 : -46} />
                ))}
            </Sidebar>
            <Content>
                <GraphBar>
                    <Tool $width={69} $gap={1} $space={5}>
                        <CaptureIcon />
                        <span>Capture</span>
                    </Tool>
                    <Tabs>
                        {tabs.map(([name, width]) => (
                            <Tab key={name} $width={width} $active={name === "All SPL"}>
                                {name}
                            </Tab>
                        ))}
                        <Tab $width={42}>
                            <Chevrons flip />
                        </Tab>
                    </Tabs>
                    <ToolList tools={graphTools} space={7} />
                </GraphBar>
                <ChartArea>
                    <Chart />
                    <Overlay $left={67} $top={102}>
                        <Select>
                            SPL
                            <svg width="14" height="9">
                                <path d="M0 0H14L7 9Z" fill="#222" />
                            </svg>
                        </Select>
                    </Overlay>
                    <Overlay $left={67} $top={599}>
                        <Button $width={213} $height={33}>Average the responses</Button>
                    </Overlay>
                    <Overlay $left={1311} $top={533}>
                        <RangeButtons>
                            <Button $width={137} $height={31}>10 .. 200</Button>
                            <Button $width={137} $height={31}>20 .. 20,000</Button>
                        </RangeButtons>
                    </Overlay>
                </ChartArea>
                <Legend>
                    {legend.map(([name, value, color]) => (
                        <LegendItem key={name} $color={color}>
                            <Checkbox />
                            <LegendName>{name}</LegendName>
                            <Smoothing color={color} />
                            <LegendValue>{value}</LegendValue>
                        </LegendItem>
                    ))}
                </Legend>
            </Content>
        </Main>
        <StatusBar>
            <StatusCell $width={138}>155/187MB</StatusCell>
            <StatusCell $width={75}>48 kHz</StatusCell>
            <StatusCell $width={225} $spacing={0.05}>Float32L in, Float32L out</StatusCell>
            <StatusCell $width={348}>
                <svg width="334" height="4">
                    {[0, 40.5, 85.5, 126, 171, 211.5, 256.5, 297].map((x) => (
                        <path key={x} d={`M${x} 2H${x + 36}`} stroke="#a5c763" strokeWidth="2" />
                    ))}
                </svg>
            </StatusCell>
            <StatusCell $width={15} />
            <StatusCell $width={350}>Peak input before clipping 127 dB SPL</StatusCell>
            <StatusCell $width={768} $spacing={0.29}>Right click &amp; drag to pan; Ctrl+Right click &amp; drag to measure; mouse wheel to zoom;</StatusCell>
        </StatusBar>
        <Taskbar>
            <StartButton>
                <WindowsLogo />
            </StartButton>
            <SearchBox>
                <SearchIcon />
                <span>搜索</span>
                <TigerImage />
            </SearchBox>
            <TaskButton>
                <TaskViewIcon />
            </TaskButton>
            {apps.map(([Icon, width], i) => (
                <TaskButton key={i} $width={width}>
                    <Icon />
                </TaskButton>
            ))}
            <TaskButton $width={73} $active $running>
                <RewIcon />
            </TaskButton>
            <TaskButton $width={8} />
            <TaskButton $width={61} $running>
                <PaintIcon />
            </TaskButton>
            <Tray>
                <TrayItem $width={36}><CloudIcon /></TrayItem>
                <TrayTemperature $width={72}>30°C</TrayTemperature>
                <TrayItem $width={34} $gap={16}>
                    <svg width="20" height="12">
                        <path d="M1 11L10 2L19 11" fill="none" stroke="#fff" strokeWidth="1.500" />
                    </svg>
                </TrayItem>
                <TrayItem $width={38}><OneDriveIcon /></TrayItem>
                <TrayItem $width={37}><MeetIcon /></TrayItem>
                <TrayItem $width={34}><WifiIcon /></TrayItem>
                <TrayItem $width={35}><VolumeIcon /></TrayItem>
                <TrayItem $width={34} $size={24}>中</TrayItem>
                <TrayItem $width={115} $size={18}>
                    上午12:03
                    <br />
                    29/7/2023
                </TrayItem>
                <TrayItem $width={56} $gap={5} $drop={13}><ActionCenterIcon /></TrayItem>
                <TrayItem $width={11} />
                <svg width="8" height="60">
                    <path d="M0.500 0V60" stroke="#717884" strokeWidth="1.500" />
                </svg>
                <Watermark>HD199.COM</Watermark>
            </Tray>
        </Taskbar>
    </Window>
);

export default App;
